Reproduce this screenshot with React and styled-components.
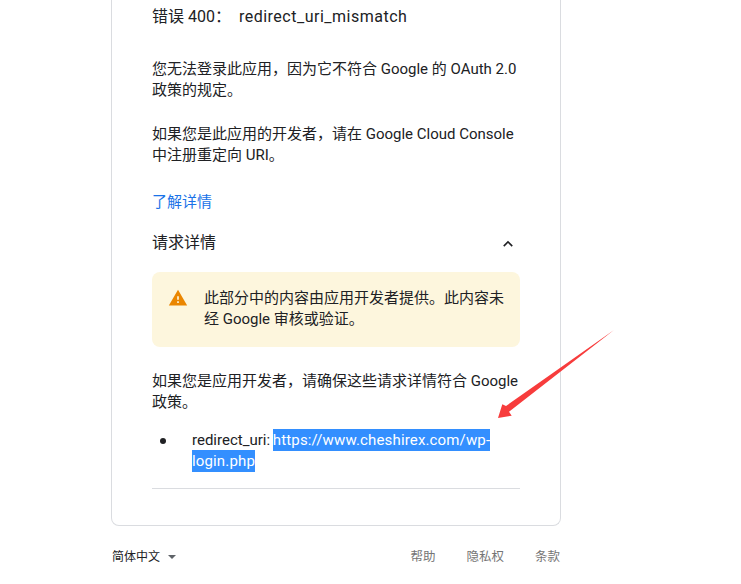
import React from 'react'
import styled, { createGlobalStyle } from 'styled-components'

const GlobalStyle = createGlobalStyle`
  html, body {
    margin: 0;
    padding: 0;
    background: #fff;
    overflow: hidden;
  }
  body {
    font-family: Roboto, "Noto Sans CJK SC", sans-serif;
    color: #202124;
  }
`

const App = () => {
  return (
    <Page>
      <GlobalStyle />
      <Column>
        <Card>
          <Heading>
            错误 400： <ErrorCode>redirect_uri_mismatch</ErrorCode>
          </Heading>
          <Para>您无法登录此应用，因为它不符合 Google 的 OAuth 2.0 政策的规定。</Para>
          <Para>如果您是此应用的开发者，请在 Google Cloud Console 中注册重定向 URI。</Para>
          <LearnMore>了解详情</LearnMore>
          <DetailsHeader>
            请求详情
            <svg width="24" height="24" viewBox="0 0 24 24" fill="#202124">
              <path d="M12 8l-6 6 1.41 1.41L12 10.83l4.59 4.58L18 14z" transform="translate(2.4 2.4) scale(0.8)" />
            </svg>
          </DetailsHeader>
          <Notice>
            <svg width="20" height="20" viewBox="0 0 24 24" fill="#ea8600">
              <path d="M1 21h22L12 2 1 21zm12-3h-2v-2h2v2zm0-4h-2v-4h2v4z" />
            </svg>
            <NoticeText>此部分中的内容由应用开发者提供。此内容未经 Google 审核或验证。</NoticeText>
          </Notice>
          <PolicyPara>如果您是应用开发者，请确保这些请求详情符合 Google 政策。</PolicyPara>
          <DetailList>
            <DetailItem>
              redirect_uri: <Selected>https://www.cheshirex.com/wp-login.php</Selected>
            </DetailItem>
          </DetailList>
          <Divider />
        </Card>
        <Footer>
          <LangPicker>
            简体中文
            <Caret />
          </LangPicker>
          <FooterLinks>
            <span>帮助</span>
            <span>隐私权</span>
            <span>条款</span>
          </FooterLinks>
        </Footer>
      </Column>
      <Arrow width="130" height="105" viewBox="0 0 130 105">
        <polygon points="124,10 16,86 12.3,84.3 8,98 21.7,95.7 19,91.7" fill="#f73c3c" />
      </Arrow>
    </Page>
  )
}

export default App

const Page = styled.div`
  position: relative;
  width: 741px;
  height: 584px;
  overflow: hidden;
`

const Column = styled.div`
  width: 450px;
  margin-left: 111px;
`

const Card = styled.div`
  box-sizing: border-box;
  height: 526px;
  padding: 4px 40px 0;
  border: 1px solid #dadce0;
  border-top: none;
  border-radius: 0 0 8px 8px;
`

const Heading = styled.div`
  font-size: 16px;
  line-height: 26px;
  margin-bottom: 29px;
`

const ErrorCode = styled.span`
  margin-left: 4px;
  letter-spacing: 0.5px;
`

const Para = styled.p`
  margin: 0 0 23px;
  font-size: 15px;
  line-height: 21px;
`

const PolicyPara = styled(Para)`
  margin-bottom: 17px;
`

const LearnMore = styled.a`
  display: block;
  margin-top: 26px;
  font-size: 15px;
  line-height: 21px;
  color: #1a73e8;
`

const DetailsHeader = styled.div`
  display: flex;
  align-items: flex-start;
  justify-content: space-between;
  margin-top: 19px;
  height: 24px;
  font-size: 16px;
  line-height: 22px;
`

const Notice = styled.div`
  box-sizing: border-box;
  display: flex;
  height: 75px;
  margin: 16px 0 24px;
  padding: 16px 16px 0;
  gap: 16px;
  background: #fdf6dd;
  border-radius: 8px;
  svg {
    flex: none;
  }
`

const NoticeText = styled.div`
  font-size: 15px;
  line-height: 21px;
`

const DetailList = styled.ul`
  margin: 0;
  padding-left: 40px;
  list-style: none;
  font-size: 15px;
  line-height: 21px;
  word-spacing: -1px;
`

const DetailItem = styled.li`
  position: relative;
  &::before {
    content: '';
    position: absolute;
    left: -32px;
    top: 8px;
    width: 6px;
    height: 6px;
    border-radius: 50%;
    background: #202124;
  }
`

const Selected = styled.span`
  padding: 2px 0;
  background: #338fff;
  color: #fff;
  letter-spacing: 0.15px;
`

const Divider = styled.div`
  height: 1px;
  margin-top: 16px;
  background: #dadce0;
`

const Footer = styled.div`
  display: flex;
  align-items: center;
  justify-content: space-between;
  margin-top: 22px;
  padding: 0 1px;
  font-size: 12px;
  line-height: 18px;
`

const LangPicker = styled.div`
  display: flex;
  align-items: center;
  gap: 8px;
`

const Caret = styled.span`
  width: 0;
  height: 0;
  border-left: 4.5px solid transparent;
  border-right: 4.5px solid transparent;
  border-top: 4.5px solid #5f6368;
`

const FooterLinks = styled.div`
  display: flex;
  gap: 31px;
  font-size: 12.5px;
  color: #757575;
`

const Arrow = styled.svg`
  position: absolute;
  left: 490px;
  top: 320px;
`
